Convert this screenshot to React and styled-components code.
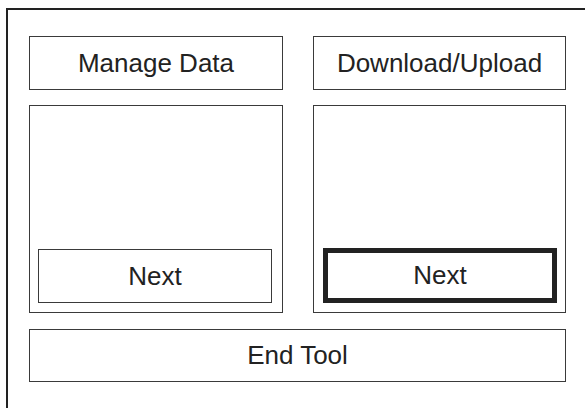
import React from "react";
import styled, { createGlobalStyle } from "styled-components";

const Global = createGlobalStyle`
  html, body {
    margin: 0;
    padding: 0;
    background: #ffffff;
    overflow: hidden;
  }
  body {
    font-family: "Liberation Sans", Arial, sans-serif;
    color: #222;
  }
`;

const Frame = styled.div`
  margin: 8px 0 0 6px;
  border-top: 2px solid #222;
  border-left: 2px solid #222;
  min-height: 420px;
  padding: 26px 0 0 21px;
  box-sizing: border-box;
`;

const Grid = styled.div`
  display: grid;
  grid-template-columns: 254px 253px;
  grid-template-rows: 54px 208px 54px;
  column-gap: 30px;
  row-gap: 15px;
  & > :last-child {
    margin-top: 1px;
  }
`;

const Box = styled.div`
  box-sizing: border-box;
  border: ${(p) => (p.$thick ? "5px solid #222" : "1px solid #3a3a3a")};
  display: flex;
  align-items: center;
  justify-content: center;
  font-size: 26px;
  color: #222;
  background: #fff;
  grid-column: ${(p) => (p.$span ? "1 / span 2" : "auto")};
`;

const Panel = styled.div`
  box-sizing: border-box;
  border: 1px solid #3a3a3a;
  display: flex;
  flex-direction: column;
  justify-content: flex-end;
  align-items: flex-start;
  padding: 0 0 9px ${(p) => p.$pl}px;
`;

const NextButton = styled(Box)`
  width: 234px;
  height: ${(p) => (p.$thick ? 55 : 54)}px;
`;

export default function App() {
  return (
    <>
      <Global />
      <Frame>
        <Grid>
          <Box>Manage Data</Box>
          <Box>Download/Upload</Box>
          <Panel $pl={8}>
            <NextButton>Next</NextButton>
          </Panel>
          <Panel $pl={9}>
            <NextButton $thick>Next</NextButton>
          </Panel>
          <Box $span>End Tool</Box>
        </Grid>
      </Frame>
    </>
  );
}
